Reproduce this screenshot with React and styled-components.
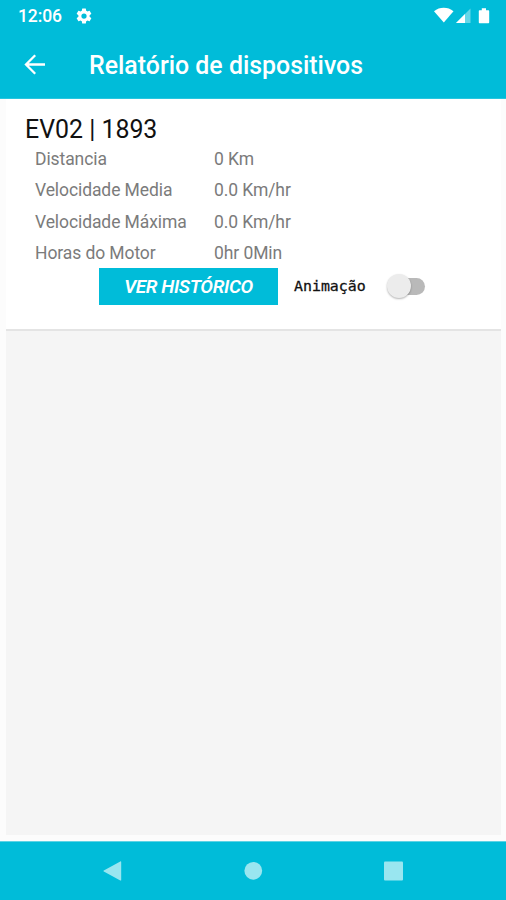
import { useState } from 'react';
import styled, { createGlobalStyle } from 'styled-components';

const GlobalStyle = createGlobalStyle`
  * {
    box-sizing: border-box;
  }
  body {
    margin: 0;
    background: #fcfcfc;
    font-family: Roboto, 'Liberation Sans', sans-serif;
  }
  :root {
    --primary: #00bcd9;
    --sub-text: #7b7b7b;
  }
`;

const Screen = styled.div`
  display: flex;
  flex-direction: column;
  height: 900px;
  overflow: hidden;
`;

const StatusBar = styled.div`
  display: flex;
  align-items: center;
  height: 32px;
  padding: 0 15px 0 18px;
  background: var(--primary);
  color: #fff;

  .time {
    width: 57px;
    font-size: 17.5px;
    font-weight: 500;
    line-height: 32px;
    letter-spacing: -0.1px;
  }
  .indicators {
    display: flex;
    align-items: center;
    margin-left: auto;
  }
  svg {
    display: block;
  }
`;

const AppBar = styled.header`
  display: flex;
  align-items: center;
  height: 67px;
  padding-left: 24px;
  background: var(--primary);
  border-bottom: 1px solid #27c6df;
  color: #fff;

  h1 {
    margin: 2px 0 0 43px;
    font-size: 24.9px;
    font-weight: 500;
    line-height: 30px;
  }
`;

const BackButton = styled.button`
  display: flex;
  width: 22px;
  padding: 0;
  border: 0;
  background: none;
  color: inherit;
`;

const Content = styled.main`
  flex: 1;
  display: flex;
  padding: 0 5px 6px 6px;
`;

const List = styled.div`
  flex: 1;
  background: #f5f5f5;
`;

const StyledReportCard = styled.section`
  height: 232px;
  padding: 17px 0 0 19px;
  background: #fff;
  border-bottom: 2px solid #e4e4e4;

  h2 {
    margin: 0;
    font-size: 24.9px;
    font-weight: 400;
    line-height: 28px;
    color: #111;
  }
`;

const Details = styled.dl`
  margin: 0;
  padding-left: 10px;
  font-size: 17.5px;
  line-height: 31px;
  letter-spacing: -0.09px;
  color: var(--sub-text);
`;

const DetailRow = styled.div`
  display: grid;
  grid-template-columns: 179px 1fr;
  height: 31.4px;

  dd {
    margin: 0;
  }
`;

const Actions = styled.div`
  display: flex;
  align-items: center;
  margin: -2px 0 0 74px;
`;

const HistoryButton = styled.button`
  width: 179px;
  height: 37px;
  padding: 1px 0 0;
  border: 0;
  background: var(--primary);
  color: #fff;
  font-family: inherit;
  font-size: 19px;
  font-style: italic;
  font-weight: 600;
  letter-spacing: -0.4px;
`;

const SwitchLabel = styled.span`
  margin-left: 16px;
  width: 92px;
  font-family: 'DejaVu Sans Mono', monospace;
  font-size: 14.9px;
  color: #111;
  -webkit-text-stroke: 0.3px #111;
`;

const Switch = styled.button`
  display: flex;
  align-items: center;
  justify-content: ${(props) => (props.$on ? 'flex-end' : 'flex-start')};
  width: 36px;
  height: 17px;
  margin-left: 3px;
  padding: 0;
  border: 0;
  border-radius: 9px;
  background: ${(props) => (props.$on ? '#80deec' : '#b9b9b9')};

  span {
    flex: none;
    width: 24px;
    height: 24px;
    margin: 0 -2px;
    border-radius: 50%;
    background: #ececec;
    box-shadow: 0 1px 2px rgba(0, 0, 0, 0.3);
  }
`;

const NavBar = styled.nav`
  display: flex;
  justify-content: space-between;
  height: 59px;
  padding: 19px 102px 0 103px;
  background: var(--primary);
  border-top: 1px solid #5dd3e5;
  color: #99e6f0;

  svg {
    display: block;
  }
`;

const report = {
  name: 'EV02 | 1893',
  details: [
    { label: 'Distancia', value: '0 Km' },
    { label: 'Velocidade Media', value: '0.0 Km/hr' },
    { label: 'Velocidade Máxima', value: '0.0 Km/hr' },
    { label: 'Horas do Motor', value: '0hr 0Min' },
  ],
};

function GearIcon() {
  return (
    <svg width="18" height="18" viewBox="0 0 24 24" fill="currentColor">
      <path d="M19.43 12.98c.04-.32.07-.64.07-.98s-.03-.66-.07-.98l2.11-1.65a.5.5 0 0 0 .12-.64l-2-3.46a.5.5 0 0 0-.61-.22l-2.49 1a7.3 7.3 0 0 0-1.69-.98l-.38-2.65A.49.49 0 0 0 14 2h-4a.49.49 0 0 0-.49.42l-.38 2.65c-.61.25-1.17.59-1.69.98l-2.49-1a.49.49 0 0 0-.61.22l-2 3.46a.49.49 0 0 0 .12.64l2.11 1.65c-.04.32-.07.65-.07.98s.03.66.07.98l-2.11 1.65a.5.5 0 0 0-.12.64l2 3.46c.12.22.39.3.61.22l2.49-1c.52.4 1.08.73 1.69.98l.38 2.65c.03.24.24.42.49.42h4c.25 0 .46-.18.49-.42l.38-2.65c.61-.25 1.17-.59 1.69-.98l2.49 1c.23.09.49 0 .61-.22l2-3.46a.5.5 0 0 0-.12-.64zM12 15.5a3.5 3.5 0 1 1 0-7 3.5 3.5 0 0 1 0 7z" />
    </svg>
  );
}

function Indicators() {
  return (
    <div className="indicators">
      <svg width="57" height="18" viewBox="0 0 57 18" fill="currentColor">
        {/* wifi */}
        <path d="M0 4.2C5.6-.4 13.9-.4 19.5 4.2L9.8 15.6z" />
        {/* signal */}
        <path d="M36.5 1.5V16H22z" opacity="0.4" />
        <path d="M31 7v9h-9z" />
        {/* battery */}
        <path d="M47.8 1.2h4.2v2h2.2c.6 0 1 .4 1 1v11c0 .6-.4 1-1 1h-8.4c-.6 0-1-.4-1-1v-11c0-.6.4-1 1-1h2z" />
      </svg>
    </div>
  );
}

function ReportCard({ report }) {
  const [animated, setAnimated] = useState(false);

  return (
    <StyledReportCard>
      <h2>{report.name}</h2>
      <Details>
        {report.details.map((item) => (
          <DetailRow key={item.label}>
            <dt>{item.label}</dt>
            <dd>{item.value}</dd>
          </DetailRow>
        ))}
      </Details>
      <Actions>
        <HistoryButton>VER HISTÓRICO</HistoryButton>
        <SwitchLabel>Animação</SwitchLabel>
        <Switch
          role="switch"
          aria-checked={animated}
          $on={animated}
          onClick={() => setAnimated(!animated)}
        >
          <span />
        </Switch>
      </Actions>
    </StyledReportCard>
  );
}

function App() {
  return (
    <Screen>
      <GlobalStyle />
      <StatusBar>
        <span className="time">12:06</span>
        <GearIcon />
        <Indicators />
      </StatusBar>
      <AppBar>
        <BackButton>
          <svg width="22" height="22" viewBox="0 0 22 22" fill="none">
            <path
              d="M21 10.5H3M11.2 1.3L2 10.5l9.2 9.2"
              stroke="currentColor"
              strokeWidth="2.3"
            />
          </svg>
        </BackButton>
        <h1>Relatório de dispositivos</h1>
      </AppBar>
      <Content>
        <List>
          <ReportCard report={report} />
        </List>
      </Content>
      <NavBar>
        <svg width="19" height="20" viewBox="0 0 19 20" fill="currentColor">
          <path d="M17.3.4c.6-.3.9 0 .9.5v18c0 .6-.3.9-.9.5L.8 10.6c-.5-.3-.5-.8 0-1.1z" />
        </svg>
        <svg width="20" height="20" viewBox="0 0 20 20" fill="currentColor">
          <circle cx="10.3" cy="9.8" r="8.9" />
        </svg>
        <svg width="20" height="20" viewBox="0 0 20 20" fill="currentColor">
          <rect x="0" y="0.5" width="19" height="19" rx="1" />
        </svg>
      </NavBar>
    </Screen>
  );
}

export default App;
